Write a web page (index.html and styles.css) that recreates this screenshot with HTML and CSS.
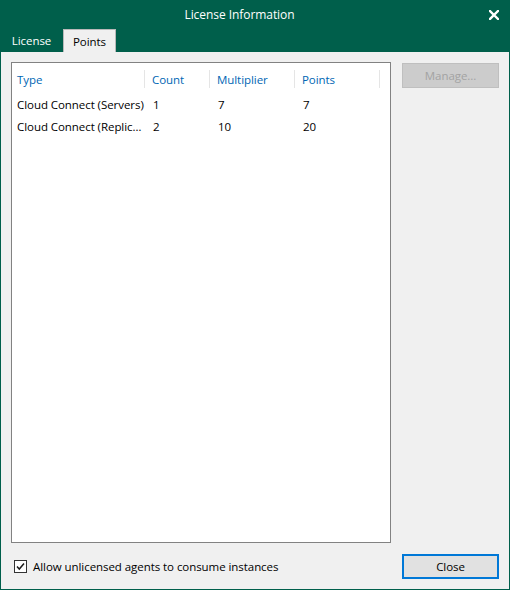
FILE: index.html
```html
<!DOCTYPE html>
<html>
<head>
<meta charset="utf-8">
<link rel="stylesheet" href="styles.css">
</head>
<body>
<div class="window">
  <div class="titlebar">
    <div class="title">License Information</div>
    <svg class="close-x" width="10" height="10" viewBox="0 0 10 10"><path d="M1 1 L9 9 M9 1 L1 9" stroke="#ffffff" stroke-width="2.4" stroke-linecap="square"/></svg>
  </div>
  <div class="tabs">
    <div class="tab tab-license">License</div>
    <div class="tab tab-points">Points</div>
  </div>
  <div class="content">
    <div class="main">
      <div class="list">
        <div class="row header">
          <div class="cell c1"><span class="hcell">Type</span></div>
          <div class="cell c2"><span class="hcell">Count</span></div>
          <div class="cell c3"><span class="hcell">Multiplier</span></div>
          <div class="cell c4"><span class="hcell">Points</span></div>
        </div>
        <div class="row data first">
          <div class="cell c1"><span class="txt">Cloud Connect (Servers)</span></div>
          <div class="cell c2"><span class="txt">1</span></div>
          <div class="cell c3"><span class="txt">7</span></div>
          <div class="cell c4"><span class="txt">7</span></div>
        </div>
        <div class="row data">
          <div class="cell c1"><span class="txt">Cloud Connect (Replicas)</span></div>
          <div class="cell c2"><span class="txt">2</span></div>
          <div class="cell c3"><span class="txt">10</span></div>
          <div class="cell c4"><span class="txt">20</span></div>
        </div>
      </div>
      <div class="side">
        <div class="btn btn-disabled">Manage...</div>
      </div>
    </div>
    <div class="footer">
      <label class="check">
        <span class="box"><svg width="11" height="11" viewBox="0 0 11 11"><path d="M2 5.5 L4.3 8 L9 2.5" fill="none" stroke="#1a1a1a" stroke-width="1.5"/></svg></span>
        <span class="check-text">Allow unlicensed agents to consume instances</span>
      </label>
      <div class="btn btn-primary">Close</div>
    </div>
  </div>
</div>
</body>
</html>
```
FILE: styles.css
```css
html, body {
  margin: 0;
  padding: 0;
}
body {
  width: 510px;
  height: 590px;
  font-family: "Open Sans", "Noto Sans", sans-serif;
  font-size: 11.5px;
  letter-spacing: -0.06px;
  color: #000;
}
.window {
  width: 510px;
  height: 590px;
  box-sizing: border-box;
  background: #005f4b;
  display: flex;
  flex-direction: column;
  padding: 0 1px 1px 1px;
}
.titlebar {
  height: 29px;
  display: flex;
  align-items: center;
  position: relative;
}
.title {
  flex: 1;
  text-align: center;
  color: #ffffff;
  font-size: 12px;
  padding-right: 31px;
  padding-left: 0;
  line-height: 29px;
}
.close-x {
  position: absolute;
  left: 488px;
  top: 10px;
}
.tabs {
  height: 23px;
  display: flex;
  align-items: stretch;
}
.tab {
  box-sizing: border-box;
  display: flex;
  align-items: center;
  justify-content: center;
  font-size: 11.5px;
}
.tab-license {
  margin-left: 1px;
  width: 59px;
  color: #ffffff;
}
.tab-points {
  margin-left: 2px;
  width: 53px;
  background: #f0f0f0;
  color: #000;
  border: 1px solid #b9b9b9;
  border-bottom: none;
}
.content {
  flex: 1;
  background: #f0f0f0;
  padding: 10px;
  display: flex;
  flex-direction: column;
  gap: 11px;
}
.main {
  flex: 1;
  display: flex;
  gap: 11px;
}
.list {
  flex: 1;
  background: #ffffff;
  border: 1px solid #828282;
  box-sizing: border-box;
  padding-top: 1px;
}
.row {
  display: flex;
}
.cell {
  box-sizing: border-box;
  white-space: nowrap;
  overflow: hidden;
}
.c1 { width: 133px; }
.c2 { width: 65px; }
.c3 { width: 85px; }
.c4 { width: 85px; }
.header .cell {
  margin-top: 6px;
  height: 18px;
  border-right: 1px solid #e5e5e5;
}
.hcell {
  display: block;
  line-height: 19px;
  color: #0066b4;
}
.header .c1 .hcell { padding-left: 5px; }
.header .cell + .cell .hcell { padding-left: 7px; }
.data .cell {
  height: 22px;
  line-height: 22px;
}
.data.first { margin-top: 6px; }
.txt {
  display: block;
  overflow: hidden;
  text-overflow: ellipsis;
}
.data .c1 .txt { padding-left: 5px; padding-right: 0; }
.data .cell + .cell .txt { padding-left: 8px; }
.side {
  width: 97px;
  padding-top: 1px;
}
.btn {
  box-sizing: border-box;
  width: 97px;
  height: 25px;
  display: flex;
  align-items: center;
  justify-content: center;
  font-size: 11.5px;
}
.btn-disabled {
  background: #cccccc;
  border: 1px solid #bfbfbf;
  color: #a3a3a3;
}
.btn-primary {
  background: #e1e1e1;
  border: 2px solid #0078d7;
  color: #000;
}
.footer {
  display: flex;
  align-items: center;
  justify-content: space-between;
  height: 25px;
}
.check {
  display: flex;
  align-items: center;
  margin-left: 3px;
}
.box {
  box-sizing: border-box;
  width: 13px;
  height: 13px;
  border: 1px solid #333333;
  background: #ffffff;
  display: flex;
  align-items: center;
  justify-content: center;
}
.check-text {
  margin-left: 6px;
}
```
